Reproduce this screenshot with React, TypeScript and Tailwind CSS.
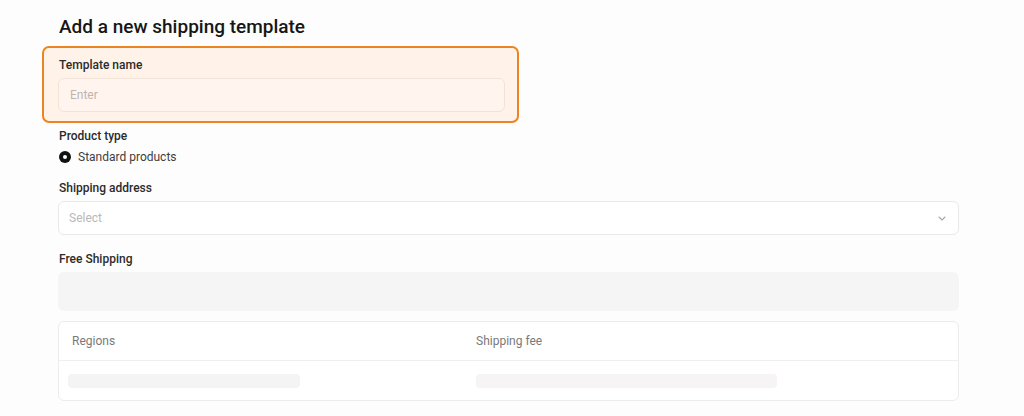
import React from "react";

export default function App() {
  return (
    <div className="min-h-[416px] w-full bg-[#fdfdfd] pl-[58px] pr-[65px] pt-[13px] font-['Roboto',sans-serif]">
      <h1 className="pl-px text-[19px] leading-[28px] font-medium text-[#161616]">
        Add a new shipping template
      </h1>

      <div className="-ml-4 mt-[5px] w-[477px] rounded-[7px] border-2 border-[#eb8422] bg-[#fff3e9] pb-[9px] pl-[14px] pt-[8px]">
        <div className="pl-px pt-px text-[12px] leading-[16px] font-medium text-[#2b2b2b]">Template name</div>
        <div className="mt-[5px] flex h-[34px] w-[447px] items-center rounded-[6px] border border-[#f1e3d7] bg-[#fff5ee] pl-[11px] text-[12px] text-[#bdb5ae]">
          Enter
        </div>
      </div>

      <div className="mt-[4px] pl-px pt-px text-[12px] leading-[16px] font-medium text-[#2b2b2b]">Product type</div>
      <div className="mt-[5px] flex h-[16px] items-center gap-[7px] pl-px">
        <span className="flex h-[12px] w-[12px] items-center justify-center rounded-full bg-[#111]">
          <span className="h-[4px] w-[4px] rounded-full bg-white" />
        </span>
        <span className="text-[12px] text-[#3d3d3d]">Standard products</span>
      </div>

      <div className="mt-[14px] pl-px pt-px text-[12px] leading-[16px] font-medium text-[#2b2b2b]">Shipping address</div>
      <div className="mt-[5px] flex h-[34px] items-center justify-between rounded-[6px] border border-[#e9e9e9] bg-white pl-[10px] pr-[12px]">
        <span className="text-[12px] text-[#b8b8b8]">Select</span>
        <svg width="8" height="5" viewBox="0 0 8 5" fill="none">
          <path d="M1 1l3 3 3-3" stroke="#a8a8a8" strokeWidth="1.1" strokeLinecap="round" strokeLinejoin="round" />
        </svg>
      </div>

      <div className="mt-[15px] pl-px pt-px text-[12px] leading-[16px] font-medium text-[#2b2b2b]">Free Shipping</div>
      <div className="mt-[5px] h-[39px] rounded-[6px] bg-[#f5f5f5]" />

      <div className="mt-[10px] rounded-[6px] border border-[#ececec] bg-white">
        <div className="grid h-[39px] grid-cols-[404px_1fr] items-center border-b border-[#efefef] text-[12px] text-[#7a7a7a]">
          <div className="pl-[13px]">Regions</div>
          <div className="pl-[13px]">Shipping fee</div>
        </div>
        <div className="grid h-[39px] grid-cols-[404px_1fr] items-center">
          <div className="pl-[9px]">
            <div className="h-[14px] w-[232px] rounded-[4px] bg-[#f4f4f4]" />
          </div>
          <div className="pl-[13px]">
            <div className="h-[14px] w-[301px] rounded-[4px] bg-[#f6f4f4]" />
          </div>
        </div>
      </div>
    </div>
  );
}
